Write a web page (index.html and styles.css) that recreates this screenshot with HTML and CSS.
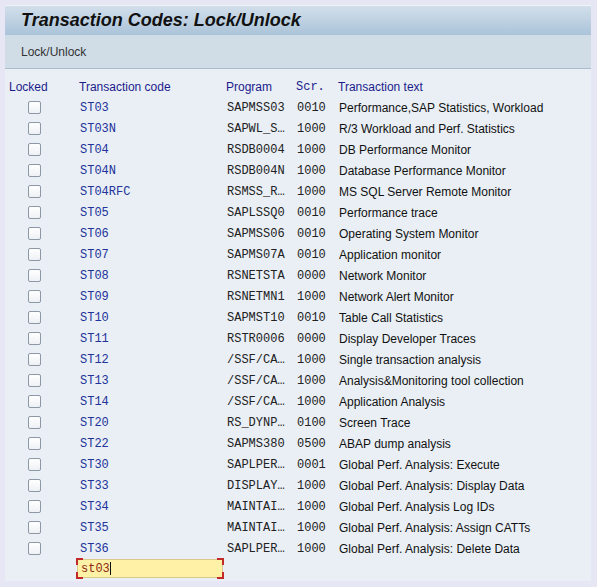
FILE: index.html
```html
<!DOCTYPE html>
<html lang="en">
<head>
    <meta charset="UTF-8">
    <meta name="viewport" content="width=device-width, initial-scale=1.0">
    <title>Transaction Codes: Lock/Unlock</title>
    <link rel="stylesheet" href="styles.css">
</head>
<body>

<div id="window">
    <div id="title-bar">
        <h1>Transaction Codes: Lock/Unlock</h1>
    </div>

    <div id="toolbar">
        <span class="tool-btn">Lock/Unlock</span>
    </div>

    <div id="content">
        <div class="grid head">
            <div class="c-lock">Locked</div>
            <div class="c-code">Transaction code</div>
            <div class="c-prog">Program</div>
            <div class="c-scr mono">Scr.</div>
            <div class="c-text">Transaction text</div>
        </div>

        <div id="rows"></div>

        <div class="grid input-row">
            <div class="c-lock"></div>
            <div class="c-code">
                <div class="field">
                    <span class="corner tl"></span>
                    <span class="corner tr"></span>
                    <span class="corner bl"></span>
                    <span class="corner br"></span>
                    <div class="field-box mono">st03<span class="caret"></span></div>
                </div>
            </div>
        </div>
    </div>
</div>

<script>
    // Transaction codes shown in the list
    const codes = [
        ["ST03", "SAPMSS03", "0010", "Performance,SAP Statistics, Workload"],
        ["ST03N", "SAPWL_S…", "1000", "R/3 Workload and Perf. Statistics"],
        ["ST04", "RSDB0004", "1000", "DB Performance Monitor"],
        ["ST04N", "RSDB004N", "1000", "Database Performance Monitor"],
        ["ST04RFC", "RSMSS_R…", "1000", "MS SQL Server Remote Monitor"],
        ["ST05", "SAPLSSQ0", "0010", "Performance trace"],
        ["ST06", "SAPMSS06", "0010", "Operating System Monitor"],
        ["ST07", "SAPMS07A", "0010", "Application monitor"],
        ["ST08", "RSNETSTA", "0000", "Network Monitor"],
        ["ST09", "RSNETMN1", "1000", "Network Alert Monitor"],
        ["ST10", "SAPMST10", "0010", "Table Call Statistics"],
        ["ST11", "RSTR0006", "0000", "Display Developer Traces"],
        ["ST12", "/SSF/CA…", "1000", "Single transaction analysis"],
        ["ST13", "/SSF/CA…", "1000", "Analysis&Monitoring tool collection"],
        ["ST14", "/SSF/CA…", "1000", "Application Analysis"],
        ["ST20", "RS_DYNP…", "0100", "Screen Trace"],
        ["ST22", "SAPMS380", "0500", "ABAP dump analysis"],
        ["ST30", "SAPLPER…", "0001", "Global Perf. Analysis: Execute"],
        ["ST33", "DISPLAY…", "1000", "Global Perf. Analysis: Display Data"],
        ["ST34", "MAINTAI…", "1000", "Global Perf. Analysis Log IDs"],
        ["ST35", "MAINTAI…", "1000", "Global Perf. Analysis: Assign CATTs"],
        ["ST36", "SAPLPER…", "1000", "Global Perf. Analysis: Delete Data"]
    ];

    const rows = document.getElementById("rows");
    codes.forEach(([code, prog, scr, text]) => {
        const row = document.createElement("div");
        row.className = "grid row";
        row.innerHTML = `
            <div class="c-lock"><span class="checkbox"></span></div>
            <div class="c-code mono">${code}</div>
            <div class="c-prog mono">${prog}</div>
            <div class="c-scr mono">${scr}</div>
            <div class="c-text">${text}</div>
        `;
        rows.appendChild(row);
    });
</script>
</body>
</html>
```

FILE: styles.css
```css
/* Page */
body {
    margin: 0;
    font-family: 'Liberation Sans', Arial, sans-serif;
    font-size: 12px;
    background-color: #e6e6f5; /* lavender frame */
}

#window {
    padding: 5px 6px 6px 5px;
    height: 587px;
    box-sizing: border-box;
    display: flex;
    flex-direction: column;
}

/* Title bar */
#title-bar {
    flex-shrink: 0;
    height: 30px;
    border-top: 1px solid #eef3f8;
    box-sizing: border-box;
    background: linear-gradient(180deg, #d2dfeb, #abc3d9);
    display: flex;
    align-items: center;
    padding-left: 16px;
}

#title-bar h1 {
    margin: 0;
    font-size: 18px;
    font-style: italic;
    font-weight: bold;
    color: #111;
}

/* Toolbar under the title */
#toolbar {
    flex-shrink: 0;
    height: 34px;
    background-color: #d0dde7;
    border-bottom: 1px solid #a9bccb;
    box-sizing: border-box;
    display: flex;
    align-items: center;
    padding-left: 16px;
}

.tool-btn {
    color: #333;
    font-size: 12px;
}

/* List area */
#content {
    flex: 1;
    min-height: 0;
    overflow: hidden;
    background-color: #e9eff5;
    padding-top: 7px;
}

.grid {
    display: grid;
    grid-template-columns: 74px 147px 70px 42px 1fr;
    height: 21px;
    align-items: center;
    white-space: nowrap;
}

.mono {
    font-family: 'Liberation Mono', 'DejaVu Sans Mono', monospace;
    font-size: 12px;
}

.head {
    color: #1c1c8c;
}

.head .c-lock {
    padding-left: 4px;
}

.row .c-code {
    color: #22339a;
    padding-left: 1px;
}

.row .c-prog,
.row .c-scr {
    color: #222;
    padding-left: 1px;
}

.head .c-scr {
    color: #1c1c8c;
}

.row .c-text {
    color: #111;
    padding-left: 1px;
}

/* Checkbox */
.checkbox {
    display: block;
    width: 11px;
    height: 11px;
    margin-left: 23px;
    border: 1px solid #8d98a4;
    border-radius: 2px;
    background: linear-gradient(180deg, #ffffff, #eef1f5);
}

/* Input field with red corner marks */
.input-row {
    align-items: start;
    margin-top: -1px;
}

.field {
    position: relative;
    width: 148px;
    height: 21px;
    margin-left: -3px;
    padding: 1px;
    box-sizing: border-box;
}

.field-box {
    height: 100%;
    box-sizing: border-box;
    background-color: #fff1a6;
    border: 1px solid #d9c98a;
    color: #8a2a12;
    padding-left: 3px;
    display: flex;
    align-items: center;
}

.caret {
    display: inline-block;
    width: 1px;
    height: 13px;
    background-color: #111;
}

.corner {
    position: absolute;
    width: 5px;
    height: 5px;
    border-color: #c22a2a;
    border-style: solid;
    border-width: 0;
}

.corner.tl { top: 0; left: 0; border-top-width: 2px; border-left-width: 2px; }
.corner.tr { top: 0; right: 0; border-top-width: 2px; border-right-width: 2px; }
.corner.bl { bottom: 0; left: 0; border-bottom-width: 2px; border-left-width: 2px; }
.corner.br { bottom: 0; right: 0; border-bottom-width: 2px; border-right-width: 2px; }
```
